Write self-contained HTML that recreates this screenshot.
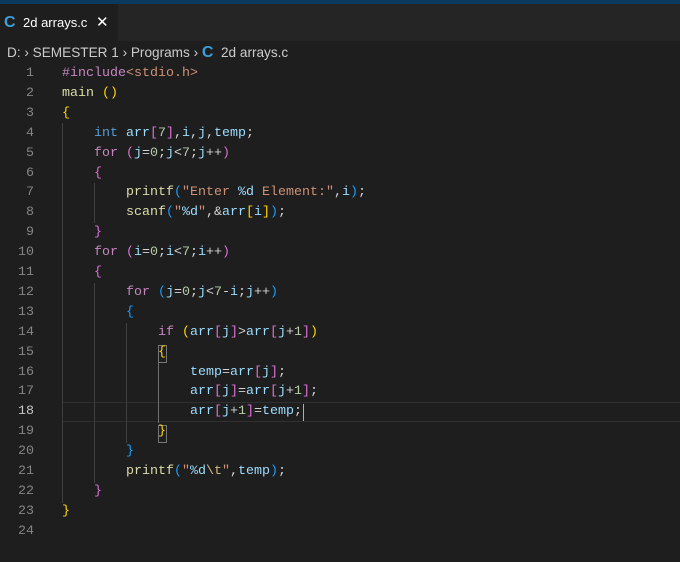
<!DOCTYPE html>
<html><head><meta charset="utf-8"><style>
*{margin:0;padding:0;box-sizing:border-box}
body{width:680px;height:548px;background:#1e1e1e;overflow:hidden;position:relative;font-family:"Liberation Sans",sans-serif}
.top{position:absolute;left:0;top:0;width:680px;height:4px;background:#0c3a5e}
.tabs{position:absolute;left:0;top:4px;width:680px;height:37px;background:#252526}
.tab{position:absolute;left:0;top:0;width:118px;height:37px;background:#1e1e1e;color:#fff;font-size:13px;line-height:37px}
.c{color:#3c9fd8;font-weight:bold;font-size:16px}
.bc{position:absolute;left:0;top:42px;height:22px;width:680px;color:#cccccc;font-size:13.6px;line-height:22px;padding-left:7px;white-space:pre}
.code{position:absolute;left:0;top:64px;font-family:"Liberation Mono",monospace;font-size:13.33px;line-height:19.9px;white-space:pre}
.ln{position:absolute;left:0;width:34px;text-align:right;color:#858585}
.tx{position:absolute;left:62px;color:#d4d4d4}
.k{color:#c586c0}.t{color:#569cd6}.f{color:#dcdcaa}.v{color:#9cdcfe}.s{color:#ce9178}.n{color:#b5cea8}
.g{color:#ffd700}.p{color:#da70d6}.b{color:#179fff}
.guide{position:absolute;width:1px;background:#404040}
</style></head><body>
<div class="top"></div>
<div class="tabs"><div class="tab"><span class="c" style="position:absolute;left:4px">C</span><span style="position:absolute;left:23px">2d arrays.c</span><span style="position:absolute;left:96px;font-size:15px">✕</span></div></div>
<div class="bc">D: › SEMESTER 1 › Programs › <span class="c">C</span>  2d arrays.c</div>
<div style="position:absolute;left:62px;top:402px;width:618px;height:20px;border-top:1px solid #303030;border-bottom:1px solid #303030"></div>
<div class="guide" style="left:62px;top:123px;height:380px"></div>
<div class="guide" style="left:94px;top:183px;height:40px"></div>
<div class="guide" style="left:94px;top:283px;height:200px"></div>
<div class="guide" style="left:126px;top:323px;height:120px"></div>
<div class="guide" style="left:158px;top:363px;height:60px;background:#707070"></div>
<div style="position:absolute;left:158px;top:345px;width:9px;height:18px;border:1px solid #777"></div>
<div style="position:absolute;left:158px;top:425px;width:9px;height:18px;border:1px solid #777"></div>
<div style="position:absolute;left:303px;top:404px;width:1px;height:17px;background:#aeafad"></div>
<div class="code">
<div class="ln" style="top:0">1</div><div class="tx" style="top:0"><span class="k">#include</span><span class="s">&lt;stdio.h&gt;</span></div>
<div class="ln" style="top:19.9px">2</div><div class="tx" style="top:19.9px"><span class="f">main</span> <span class="g">()</span></div>
<div class="ln" style="top:39.8px">3</div><div class="tx" style="top:39.8px"><span class="g">{</span></div>
<div class="ln" style="top:59.7px">4</div><div class="tx" style="top:59.7px">    <span class="t">int</span> <span class="v">arr</span><span class="p">[</span><span class="n">7</span><span class="p">]</span>,<span class="v">i</span>,<span class="v">j</span>,<span class="v">temp</span>;</div>
<div class="ln" style="top:79.6px">5</div><div class="tx" style="top:79.6px">    <span class="k">for</span> <span class="p">(</span><span class="v">j</span>=<span class="n">0</span>;<span class="v">j</span>&lt;<span class="n">7</span>;<span class="v">j</span>++<span class="p">)</span></div>
<div class="ln" style="top:99.5px">6</div><div class="tx" style="top:99.5px">    <span class="p">{</span></div>
<div class="ln" style="top:119.4px">7</div><div class="tx" style="top:119.4px">        <span class="f">printf</span><span class="b">(</span><span class="s">"Enter </span><span class="v">%d</span><span class="s"> Element:"</span>,<span class="v">i</span><span class="b">)</span>;</div>
<div class="ln" style="top:139.3px">8</div><div class="tx" style="top:139.3px">        <span class="f">scanf</span><span class="b">(</span><span class="s">"</span><span class="v">%d</span><span class="s">"</span>,&amp;<span class="v">arr</span><span class="g">[</span><span class="v">i</span><span class="g">]</span><span class="b">)</span>;</div>
<div class="ln" style="top:159.2px">9</div><div class="tx" style="top:159.2px">    <span class="p">}</span></div>
<div class="ln" style="top:179.1px">10</div><div class="tx" style="top:179.1px">    <span class="k">for</span> <span class="p">(</span><span class="v">i</span>=<span class="n">0</span>;<span class="v">i</span>&lt;<span class="n">7</span>;<span class="v">i</span>++<span class="p">)</span></div>
<div class="ln" style="top:199px">11</div><div class="tx" style="top:199px">    <span class="p">{</span></div>
<div class="ln" style="top:218.9px">12</div><div class="tx" style="top:218.9px">        <span class="k">for</span> <span class="b">(</span><span class="v">j</span>=<span class="n">0</span>;<span class="v">j</span>&lt;<span class="n">7</span>-<span class="v">i</span>;<span class="v">j</span>++<span class="b">)</span></div>
<div class="ln" style="top:238.8px">13</div><div class="tx" style="top:238.8px">        <span class="b">{</span></div>
<div class="ln" style="top:258.7px">14</div><div class="tx" style="top:258.7px">            <span class="k">if</span> <span class="g">(</span><span class="v">arr</span><span class="p">[</span><span class="v">j</span><span class="p">]</span>&gt;<span class="v">arr</span><span class="p">[</span><span class="v">j</span>+<span class="n">1</span><span class="p">]</span><span class="g">)</span></div>
<div class="ln" style="top:278.6px">15</div><div class="tx" style="top:278.6px">            <span class="g">{</span></div>
<div class="ln" style="top:298.5px">16</div><div class="tx" style="top:298.5px">                <span class="v">temp</span>=<span class="v">arr</span><span class="p">[</span><span class="v">j</span><span class="p">]</span>;</div>
<div class="ln" style="top:318.4px">17</div><div class="tx" style="top:318.4px">                <span class="v">arr</span><span class="p">[</span><span class="v">j</span><span class="p">]</span>=<span class="v">arr</span><span class="p">[</span><span class="v">j</span>+<span class="n">1</span><span class="p">]</span>;</div>
<div class="ln" style="top:338.3px;color:#c6c6c6">18</div><div class="tx" style="top:338.3px">                <span class="v">arr</span><span class="p">[</span><span class="v">j</span>+<span class="n">1</span><span class="p">]</span>=<span class="v">temp</span>;</div>
<div class="ln" style="top:358.2px">19</div><div class="tx" style="top:358.2px">            <span class="g">}</span></div>
<div class="ln" style="top:378.1px">20</div><div class="tx" style="top:378.1px">        <span class="b">}</span></div>
<div class="ln" style="top:398px">21</div><div class="tx" style="top:398px">        <span class="f">printf</span><span class="b">(</span><span class="s">"</span><span class="v">%d</span><span class="s" style="color:#d7ba7d">\t</span><span class="s">"</span>,<span class="v">temp</span><span class="b">)</span>;</div>
<div class="ln" style="top:417.9px">22</div><div class="tx" style="top:417.9px">    <span class="p">}</span></div>
<div class="ln" style="top:437.8px">23</div><div class="tx" style="top:437.8px"><span class="g">}</span></div>
<div class="ln" style="top:457.7px">24</div>
</div>
</body></html>
